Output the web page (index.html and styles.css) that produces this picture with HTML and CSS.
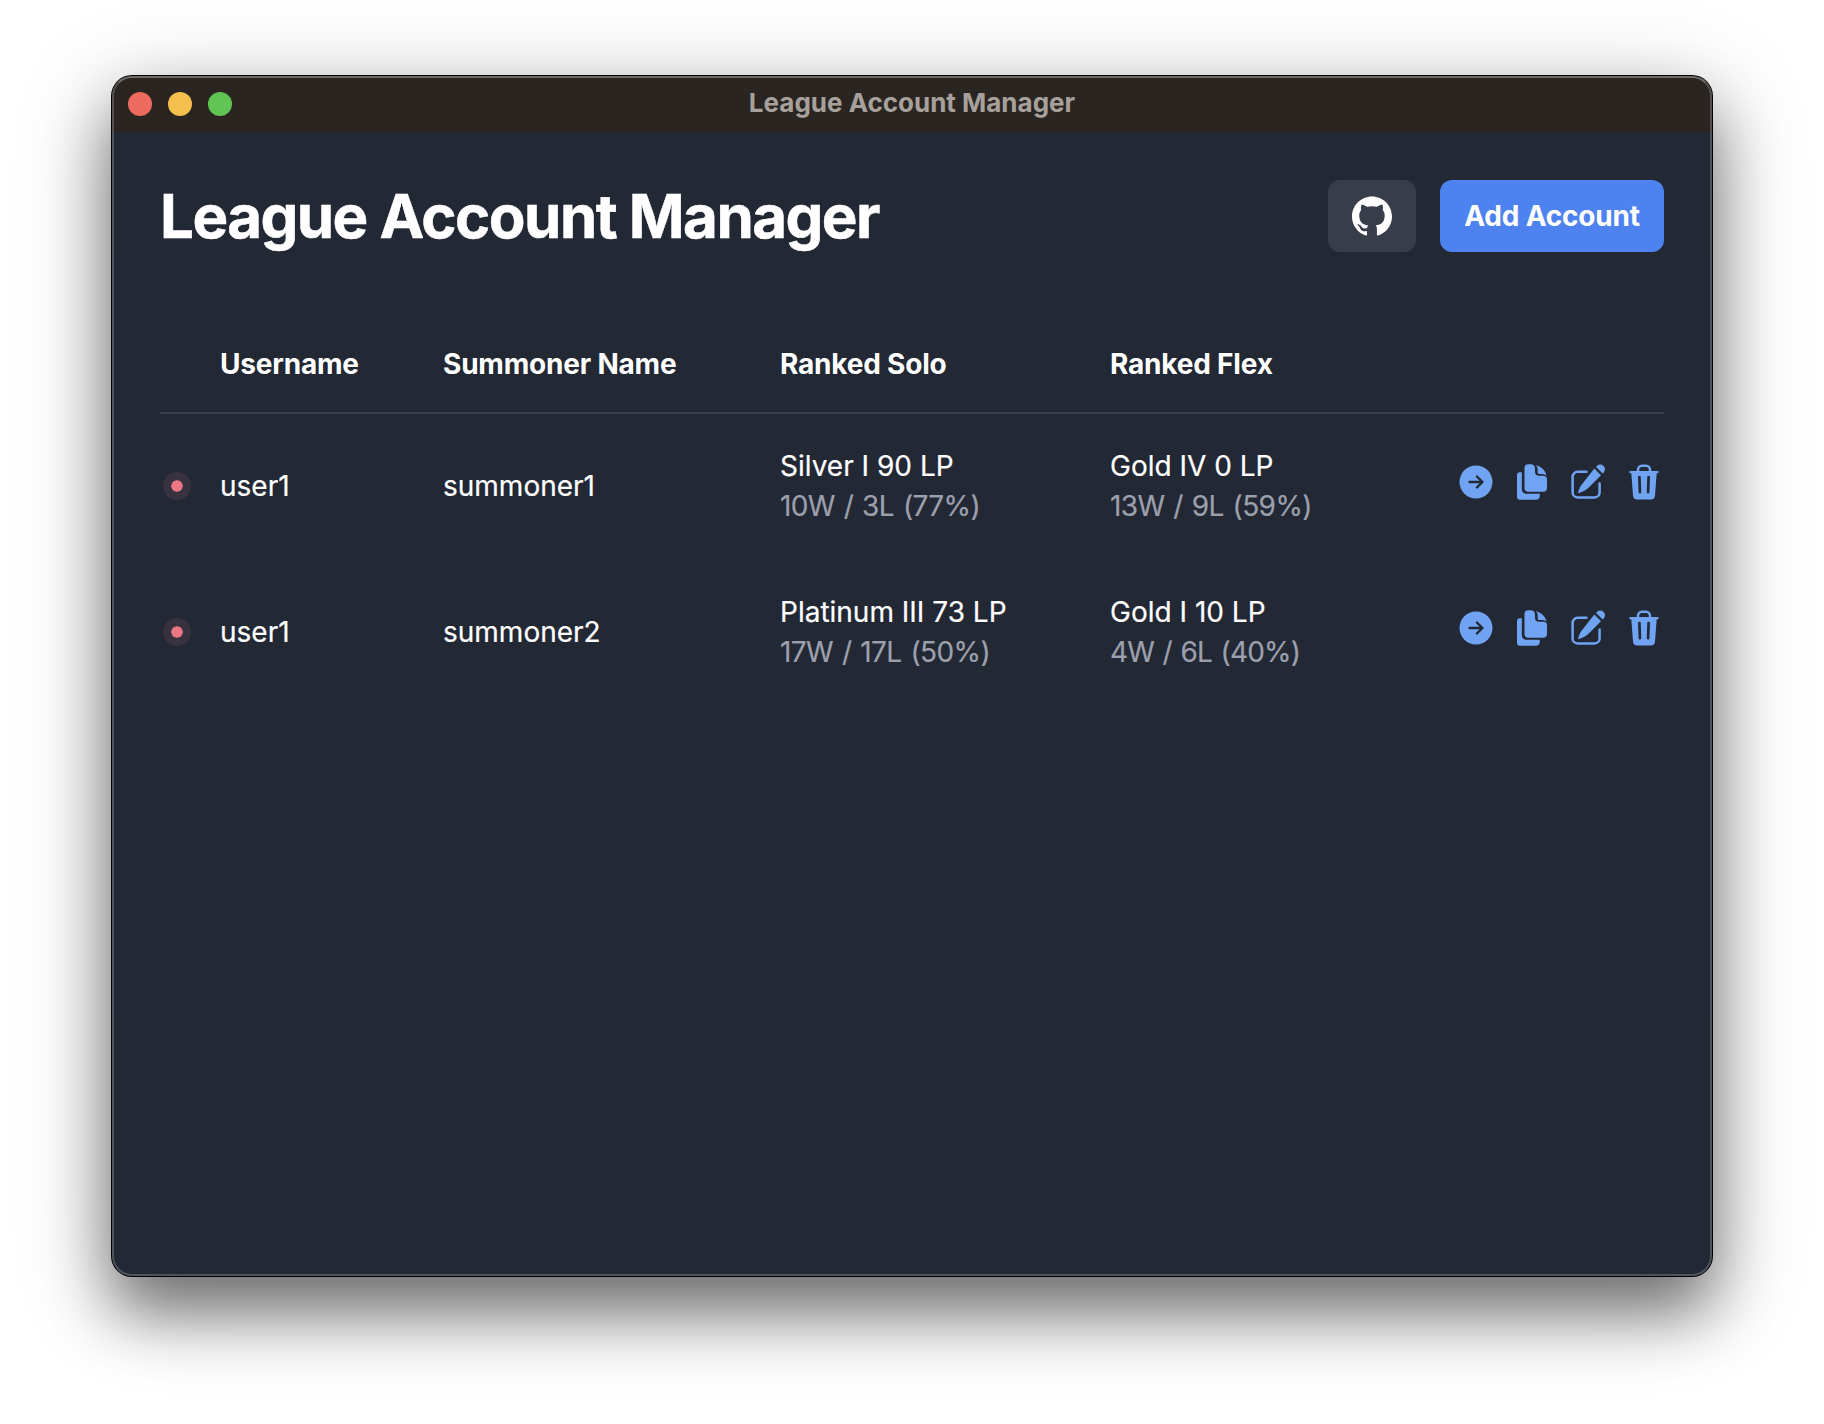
FILE: index.html
```html
<!DOCTYPE html>
<html lang="en">
<head>
<meta charset="utf-8">
<title>League Account Manager</title>
<link rel="stylesheet" href="styles.css">
</head>
<body>
<svg class="sprite" aria-hidden="true">
  <symbol id="i-go" viewBox="0 0 36 36"><circle cx="18" cy="18" r="16.5" fill="currentColor"/><path d="M11.500 18h13M18.900 12.500l5.600 5.500-5.600 5.500" fill="none" stroke="#222834" stroke-width="2.400" stroke-linecap="round" stroke-linejoin="round"/></symbol>
  <symbol id="i-copy" viewBox="0 0 36 36"><path fill="currentColor" d="M3 11.200q0-3 3-3h1.800v16.600q0 5 5 5h13v1.700q0 4.300-4.300 4.300H6q-3 0-3-3z"/><path fill="currentColor" d="M10.500 4q0-3.700 3.700-3.700h2.600q4.200 0 4.200 4.500v2.700q0 4.300 4.300 4.300h4q3.700 0 3.700 3.700v8.500q0 3.700-3.700 3.700H14.200q-3.700 0-3.700-3.700zM21.700.9q9.300 2.700 10.900 10.900-1.800-1.800-4.300-1.800h-3.100q-1.500 0-1.500-1.500V5q0-2.300-2-4.100z"/></symbol>
  <symbol id="i-edit" viewBox="0 0 36 36"><path d="M16.500 7.800H7.600a5 5 0 0 0-5 5v15.600a5 5 0 0 0 5 5h17a5 5 0 0 0 5-5v-8.800" fill="none" stroke="currentColor" stroke-width="2.500" stroke-linecap="round"/><path fill="currentColor" d="M24.300 4.500 31 11.200 18.500 23.800q-4 4-10.500 5.400 1.400-6.600 5.400-10.600zM26 2.900l.9-.9a4.600 4.600 0 0 1 6.700 6.700l-.9.900z"/></symbol>
  <symbol id="i-trash" viewBox="0 0 36 36"><path d="M12 7.500V5.800a4 4 0 0 1 4-4h4a4 4 0 0 1 4 4v1.700" fill="none" stroke="currentColor" stroke-width="2.500"/><path fill="currentColor" d="M4.500 7h27q1.300 0 1.300 1.100t-1.300 1.200h-.8L29 31.500q-.3 4-4 4H11q-3.700 0-4-4L5.300 9.300h-.8q-1.300 0-1.300-1.200T4.500 7z"/><path d="M13.400 13l.5 15.200M22.600 13l-.5 15.200" fill="none" stroke="#222834" stroke-width="2.700" stroke-linecap="round"/></symbol>
</svg>
<div class="window">
  <div class="titlebar">
    <div class="lights"><span class="light red"></span><span class="light yellow"></span><span class="light green"></span></div>
    <span class="caption">League Account Manager</span>
    <div></div>
  </div>
  <main class="content">
    <header class="header">
      <h1>League Account Manager</h1>
      <div class="buttons">
        <button class="btn ghost" aria-label="GitHub"><svg viewBox="0 0 24 24" width="40" height="40" fill="currentColor"><path d="M12 .297c-6.630 0-12 5.373-12 12 0 5.303 3.438 9.800 8.205 11.385.6.113.82-.258.82-.577 0-.285-.01-1.040-.015-2.040-3.338.724-4.042-1.610-4.042-1.610C4.422 18.070 3.633 17.700 3.633 17.700c-1.087-.744.084-.729.084-.729 1.205.084 1.838 1.236 1.838 1.236 1.070 1.835 2.809 1.305 3.495.998.108-.776.417-1.305.76-1.605-2.665-.3-5.466-1.332-5.466-5.930 0-1.310.465-2.380 1.235-3.220-.135-.303-.54-1.523.105-3.176 0 0 1.005-.322 3.300 1.230.96-.267 1.980-.399 3-.405 1.020.006 2.040.138 3 .405 2.280-1.552 3.285-1.230 3.285-1.230.645 1.653.24 2.873.12 3.176.765.840 1.230 1.910 1.230 3.220 0 4.610-2.805 5.625-5.475 5.920.42.360.81 1.096.81 2.220 0 1.606-.015 2.896-.015 3.286 0 .315.210.690.825.570C20.565 22.092 24 17.592 24 12.297c0-6.627-5.373-12-12-12"/></svg></button>
        <button class="btn primary">Add Account</button>
      </div>
    </header>
    <table class="accounts">
      <colgroup><col class="c-status"><col class="c-user"><col class="c-name"><col class="c-solo"><col class="c-flex"><col></colgroup>
      <thead><tr><th></th><th>Username</th><th>Summoner Name</th><th>Ranked Solo</th><th>Ranked Flex</th><th></th></tr></thead>
      <tbody>
        <tr>
          <td><span class="dot"></span></td><td>user1</td><td>summoner1</td>
          <td>Silver I 90 LP<div class="record">10W / 3L (77%)</div></td>
          <td>Gold IV 0 LP<div class="record">13W / 9L (59%)</div></td>
          <td><div class="actions"><svg><use href="#i-go"/></svg><svg><use href="#i-copy"/></svg><svg><use href="#i-edit"/></svg><svg><use href="#i-trash"/></svg></div></td>
        </tr>
        <tr>
          <td><span class="dot"></span></td><td>user1</td><td>summoner2</td>
          <td>Platinum III 73 LP<div class="record">17W / 17L (50%)</div></td>
          <td>Gold I 10 LP<div class="record tight">4W / 6L (40%)</div></td>
          <td><div class="actions"><svg><use href="#i-go"/></svg><svg><use href="#i-copy"/></svg><svg><use href="#i-edit"/></svg><svg><use href="#i-trash"/></svg></div></td>
        </tr>
      </tbody>
    </table>
  </main>
</div>
</body>
</html>
```
FILE: styles.css
```css
* { box-sizing: border-box; }
body { margin: 0; height: 1424px; padding: 76px 112px 0; background: #fff; font-family: Inter, "Liberation Sans", sans-serif; color: #fff; overflow: hidden; }
.sprite { display: none; }
.window { position: relative; height: 1200px; border-radius: 20px; background: #222834; box-shadow: 0 0 0 1px #000, 0 36px 64px rgba(0,0,0,.48), 0 20px 100px rgba(0,0,0,.24); }
.window::after { content: ""; position: absolute; inset: 0; border: 2px solid rgba(255,255,255,.2); border-top-color: rgba(255,255,255,.32); border-radius: 20px; pointer-events: none; }
.titlebar { height: 56px; padding: 0 16px; display: grid; grid-template-columns: 1fr auto 1fr; align-items: center; background: #2b2521; border-radius: 20px 20px 0 0; }
.lights { display: flex; gap: 16px; }
.light { width: 24px; height: 24px; border-radius: 50%; }
.red { background: #ed6a5f; }
.yellow { background: #f5bf4f; }
.green { background: #61c555; }
.caption { font-size: 26px; font-weight: 700; line-height: 32px; color: #a7a09b; padding-bottom: 2px; }
.content { padding: 48px; }
.header { display: flex; justify-content: space-between; align-items: center; height: 72px; margin-bottom: 64px; }
h1 { margin: 0; font-size: 60px; line-height: 72px; font-weight: 700; letter-spacing: -1.55px; -webkit-text-stroke: .5px #fff; }
.buttons { display: flex; gap: 24px; }
.btn { height: 72px; border: 0; border-radius: 12px; padding: 0 24px; display: flex; align-items: center; justify-content: center; font: 700 28px/40px Inter, sans-serif; letter-spacing: -.2px; color: #fff; white-space: nowrap; }
.ghost { width: 88px; background: #383e49; }
.primary { width: 224px; background: #4e82ee; }
.accounts { width: 1504px; table-layout: fixed; border-collapse: separate; border-spacing: 0; font-size: 28px; line-height: 40px; }
.c-status { width: 60px; }
.c-user { width: 223px; }
.c-name { width: 337px; }
.c-solo { width: 330px; }
.c-flex { width: 330px; }
th { height: 98px; padding: 0; text-align: left; font-weight: 650; letter-spacing: -.2px; border-bottom: 2px solid #3a404b; }
td { height: 146px; padding: 0 0 2px; vertical-align: middle; -webkit-text-stroke: .2px; }
.record { color: #9ca0ac; letter-spacing: -.6px; word-spacing: 1.6px; }
.tight { letter-spacing: -.85px; }
.dot { display: block; width: 28px; height: 28px; margin-left: 3px; border-radius: 50%; border: 8px solid #383240; background: #eb7785; background-clip: padding-box; }
.actions { display: flex; justify-content: flex-end; gap: 20px; padding: 0 2px 8px 0; color: #70a4f3; }
.actions svg { width: 36px; height: 36px; }
```
